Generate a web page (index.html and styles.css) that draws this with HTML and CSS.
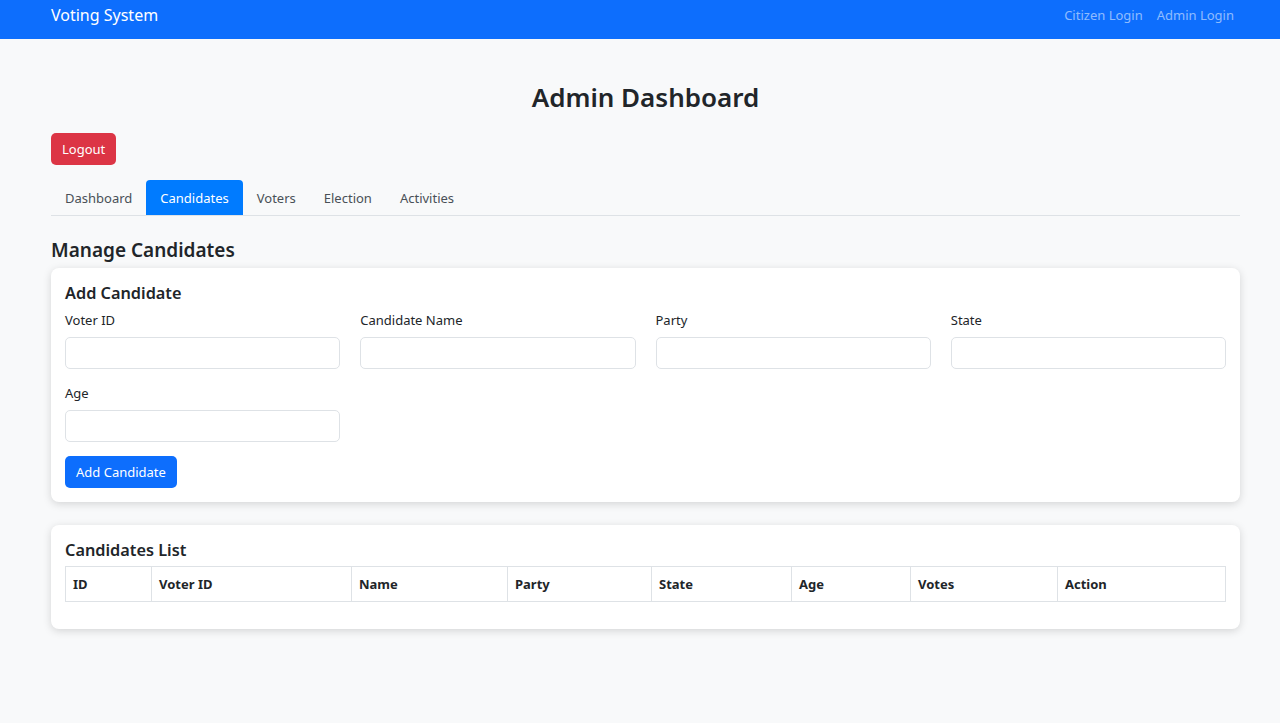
FILE: index.html
```html
<!DOCTYPE html>
<html lang="en">
<head>
<meta charset="utf-8">
<title>Admin Dashboard</title>
<link rel="stylesheet" href="styles.css">
</head>
<body>
<nav class="navbar">
  <a class="brand" href="#">Voting System</a>
  <div class="nav-links">
    <a href="#">Citizen Login</a>
    <a href="#">Admin Login</a>
  </div>
</nav>
<main class="container">
  <h2 class="title">Admin Dashboard</h2>
  <div><button class="btn btn-danger">Logout</button></div>
  <ul class="tabs">
    <li class="tab">Dashboard</li>
    <li class="tab active">Candidates</li>
    <li class="tab">Voters</li>
    <li class="tab">Election</li>
    <li class="tab">Activities</li>
  </ul>
  <h4 class="section-title">Manage Candidates</h4>
  <section class="card">
    <h5 class="card-title">Add Candidate</h5>
    <div class="form-grid">
      <label class="field"><span>Voter ID</span><input type="text"></label>
      <label class="field"><span>Candidate Name</span><input type="text"></label>
      <label class="field"><span>Party</span><input type="text"></label>
      <label class="field"><span>State</span><input type="text"></label>
      <label class="field"><span>Age</span><input type="text"></label>
    </div>
    <div><button class="btn btn-primary">Add Candidate</button></div>
  </section>
  <section class="card card-list">
    <h5 class="card-title">Candidates List</h5>
    <table class="table">
      <thead>
        <tr>
          <th class="c-id">ID</th>
          <th class="c-vid">Voter ID</th>
          <th class="c-name">Name</th>
          <th class="c-party">Party</th>
          <th class="c-state">State</th>
          <th class="c-age">Age</th>
          <th class="c-votes">Votes</th>
          <th>Action</th>
        </tr>
      </thead>
      <tbody></tbody>
    </table>
  </section>
</main>
</body>
</html>
```

FILE: styles.css
```css
* { box-sizing: border-box; }
html, body { margin: 0; padding: 0; }
body {
  background: #f8f9fa;
  font-family: "Noto Sans", "Open Sans", sans-serif;
  font-size: 13px;
  color: #212529;
}
.navbar {
  height: 39px;
  background: #0d6efd;
  display: flex;
  align-items: flex-start;
  justify-content: space-between;
  padding: 4px 46px 0 51px;
}
.brand {
  color: #fff;
  text-decoration: none;
  font-size: 16px;
  line-height: 22px;
}
.nav-links { display: flex; gap: 14px; }
.nav-links a {
  color: rgba(255,255,255,0.55);
  text-decoration: none;
  font-size: 13px;
  line-height: 22px;
}
.container {
  padding: 0 40px 40px 51px;
}
.title {
  text-align: center;
  font-size: 26px;
  font-weight: 600;
  margin: 40px 0 18px;
  line-height: 36px;
}
.btn {
  border: none;
  border-radius: 5px;
  color: #fff;
  font-family: inherit;
  font-size: 13px;
  height: 32px;
  padding: 0 11px;
  cursor: pointer;
}
.btn-danger { background: #dc3545; }
.btn-primary { background: #0d6efd; }
.tabs {
  list-style: none;
  margin: 15px 0 0;
  padding: 0;
  display: flex;
  border-bottom: 1px solid #dee2e6;
}
.tab {
  height: 35px;
  display: flex;
  align-items: center;
  padding: 0 14px;
  color: #495057;
  border-radius: 4px 4px 0 0;
}
.tab.active { background: #007bff; color: #fff; }
.section-title {
  font-size: 19px;
  font-weight: 600;
  margin: 21px 0 5px;
  line-height: 26px;
}
.card {
  background: #fff;
  border-radius: 8px;
  box-shadow: 0 2px 8px rgba(0,0,0,0.15);
  padding: 13px 14px 14px;
}
.card-title {
  font-size: 16.3px;
  font-weight: 600;
  margin: 0 0 5px;
  line-height: 24px;
}
.form-grid {
  display: grid;
  grid-template-columns: repeat(4, 1fr);
  column-gap: 20px;
  row-gap: 14px;
  margin-bottom: 14px;
}
.field { display: flex; flex-direction: column; gap: 7px; }
.field span { line-height: 20px; }
.field input {
  height: 32px;
  border: 1px solid #dee2e6;
  border-radius: 5px;
  background: #fff;
  font-family: inherit;
  font-size: 13px;
}
.card-list { margin-top: 23px; padding-bottom: 27px; }
.card-list .card-title { margin-bottom: 4px; }
.table {
  width: 100%;
  border-collapse: collapse;
}
.table th {
  border: 1px solid #dee2e6;
  height: 35px;
  text-align: left;
  padding: 0 7px;
  font-weight: 700;
  font-size: 13px;
}
.c-id { width: 86px; }
.c-vid { width: 200px; }
.c-name { width: 156px; }
.c-party { width: 144px; }
.c-state { width: 140px; }
.c-age { width: 119px; }
.c-votes { width: 147px; }
```
